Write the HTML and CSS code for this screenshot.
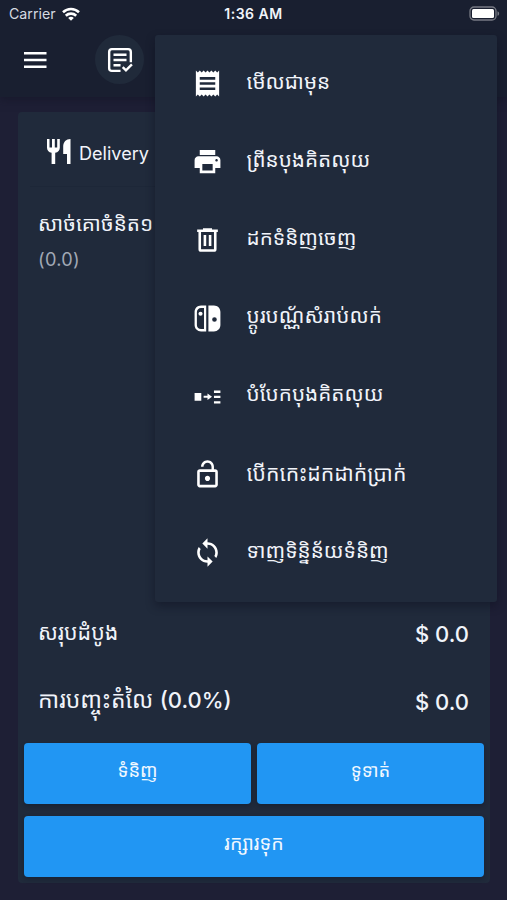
FILE: index.html
```html
<!DOCTYPE html>
<html lang="km">
<head>
<meta charset="utf-8">
<title>Order</title>
<link rel="stylesheet" href="styles.css">
</head>
<body>
<div class="screen">
  <header class="top">
    <div class="status">
      <div class="carrier"><span>Carrier</span>
        <svg class="wifi" viewBox="0 0 18 14"><g fill="none" stroke="#fff" stroke-width="2.6"><path d="M1 5.200C5.600.9 12.400.9 17 5.200"/><path d="M3.800 8.700c2.900-2.800 7.500-2.800 10.400 0"/></g><path d="M6.200 10.900c1.600-1.500 4-1.500 5.600 0L9 13.800z" fill="#fff"/></svg>
      </div>
      <div class="time">1:36 AM</div>
      <svg class="battery" viewBox="0 0 32 15"><rect x="1" y="1" width="26" height="13" rx="4" fill="none" stroke="#777a84" stroke-width="1.300"/><rect x="3" y="3" width="22" height="9" rx="1.500" fill="#fff"/><path d="M28.500 5.200c2.200.8 2.200 3.800 0 4.600z" fill="#777a84"/></svg>
    </div>
    <div class="bar">
      <svg class="burger" viewBox="0 0 24 18"><path d="M1 2.300h22.500M1 9h22.500M1 15.700h22.500" stroke="#fff" stroke-width="2.600"/></svg>
      <div class="round">
        <svg viewBox="0 0 24 24" fill="none" stroke="#fff" stroke-width="2.200"><path d="M12.500 22H4.500Q2 22 2 19.500V4.500Q2 2 4.500 2h15Q22 2 22 4.500V14M6 7.200h12M6 12h12M6 16.800h6.500M14.500 18.500l3 3 5.500-5.500"/></svg>
      </div>
    </div>
  </header>
  <main class="card">
    <div class="mode">
      <svg viewBox="0 0 24 26" fill="#fff"><path d="M0 1h2.500v8.500H5V1h2.800v8.500h2.400V1h2.600v8.800c0 2.700-1.700 4.500-4.600 5V26H4.600V14.800C1.700 14.300 0 12.500 0 9.800zM23.500 1v25H20V16h-3.800V8.500C16.200 4 19 1 23.500 1z"/></svg>
      <span>Delivery</span>
    </div>
    <div class="item">
      <div class="kh name">សាច់គោចំនិត១</div>
      <div class="qty">(0.0)</div>
    </div>
    <div class="totals">
      <div class="total"><span class="kh label">សរុបដំបូង</span><b>$ 0.0</b></div>
      <div class="total"><span class="kh label discount">ការបញ្ចុះតំលៃ <b>(0.0%)</b></span><b>$ 0.0</b></div>
    </div>
    <div class="buttons">
      <button class="kh">ទំនិញ</button>
      <button class="kh">ទូទាត់</button>
      <button class="kh wide">រក្សារទុក</button>
    </div>
  </main>
  <nav class="menu">
    <div class="row"><svg viewBox="0 0 24 24"><path d="M18 17H6v-2h12v2zm0-4H6v-2h12v2zm0-4H6V7h12v2zM3 22l1.500-1.500L6 22l1.500-1.500L9 22l1.500-1.500L12 22l1.500-1.500L15 22l1.500-1.500L18 22l1.500-1.500L21 22V2l-1.500 1.500L18 2l-1.500 1.500L15 2l-1.500 1.500L12 2l-1.500 1.500L9 2 7.500 3.500 6 2 4.500 3.500 3 2v20z"/></svg><span class="kh">មើលជាមុន</span></div>
    <div class="row"><svg viewBox="0 0 24 24"><path d="M19 8H5c-1.660 0-3 1.340-3 3v6h4v4h12v-4h4v-6c0-1.660-1.340-3-3-3zm-3 11H8v-5h8v5zm3-7c-.55 0-1-.45-1-1s.45-1 1-1 1 .45 1 1-.45 1-1 1zm-1-9H6v4h12V3z"/></svg><span class="kh">ព្រីនបុងគិតលុយ</span></div>
    <div class="row"><svg viewBox="0 0 24 24"><path fill-rule="evenodd" d="M8.500 3.200h7v1H20V6.200h-1V19.500Q19 21.500 17 21.500H7Q5 21.500 5 19.500V6.200H4V4.200h4.500zM7 6.200V19.500H17V6.200zM9 8.500h2v8.500H9zM13 8.500h2v8.500h-2z"/></svg><span class="kh">ដកទំនិញចេញ</span></div>
    <div class="row"><svg viewBox="0 0 24 24"><path fill-rule="evenodd" d="M7 2h4v20H7c-2.800 0-5-2.200-5-5V7c0-2.800 2.200-5 5-5zm0 1.800C5.200 3.800 3.800 5.200 3.800 7v10c0 1.800 1.400 3.200 3.200 3.200h2.300V3.800zM12.700 2H17c2.800 0 5 2.200 5 5v10c0 2.800-2.200 5-5 5h-4.300zM17.400 11a1.800 1.800 0 100 3.600 1.800 1.800 0 000-3.600z"/><circle cx="6.600" cy="8.300" r="1.600"/></svg><span class="kh">ប្តូរបណ្ណ័សំរាប់លក់</span></div>
    <div class="row"><svg viewBox="0 0 24 24"><path d="M2 9.200h5.200v6H2zM9 11.500h3V9.600l3.500 2.600-3.500 2.600v-1.900H9zM17 7.400h5v1.800h-5zM17 11.400h5v1.800h-5zM17 15.600h5v1.800h-5z"/></svg><span class="kh">បំបែកបុងគិតលុយ</span></div>
    <div class="row"><svg viewBox="0 0 24 24"><path d="M12 17c1.100 0 2-.9 2-2s-.9-2-2-2-2 .9-2 2 .9 2 2 2zm6-9h-1V6c0-2.760-2.240-5-5-5S7 3.240 7 6h1.900c0-1.710 1.390-3.100 3.100-3.100s3.100 1.390 3.100 3.100v2H6c-1.100 0-2 .9-2 2v10c0 1.100.9 2 2 2h12c1.100 0 2-.9 2-2V10c0-1.100-.9-2-2-2zm0 12H6V10h12v10z"/></svg><span class="kh long">បើកកេះដកដាក់ប្រាក់</span></div>
    <div class="row"><svg viewBox="0 0 24 24"><path d="M12 4V1L8 5l4 4V6c3.310 0 6 2.690 6 6 0 1.010-.25 1.970-.7 2.800l1.460 1.460C19.540 15.030 20 13.570 20 12c0-4.420-3.580-8-8-8zm0 14c-3.310 0-6-2.690-6-6 0-1.010.25-1.970.7-2.800L5.240 7.740C4.460 8.970 4 10.430 4 12c0 4.420 3.580 8 8 8v3l4-4-4-4v3z"/></svg><span class="kh">ទាញទិន្និន័យទំនិញ</span></div>
  </nav>
</div>
</body>
</html>
```
FILE: styles.css
```css
* { box-sizing: border-box; }
body { margin: 0; background: #1e1f35; color: #f1f4fa; font-family: Inter, "Noto Sans", "Noto Sans Khmer", "Khmer OS", sans-serif; }
.screen { position: relative; width: 507px; height: 900px; overflow: hidden; display: flex; flex-direction: column; }
.top { height: 97px; background: #191f30; box-shadow: 0 3px 8px rgba(18, 20, 36, .5); }
.status { height: 27px; display: grid; grid-template-columns: 1fr auto 1fr; align-items: center; padding: 0 6px 0 9px; }
.carrier { display: flex; align-items: center; gap: 6px; color: #d6dae1; font-size: 14.2px; }
.wifi { width: 18px; height: 14px; }
.time { font-weight: 600; font-size: 14px; letter-spacing: .5px; margin-right: 3px; }
.battery { width: 32px; height: 15px; justify-self: end; }
.bar { display: flex; align-items: center; height: 65px; padding-left: 23px; gap: 48px; }
.burger { width: 24px; height: 18px; }
.round { width: 49px; height: 49px; border-radius: 50%; background: #202a3a; display: flex; align-items: center; justify-content: center; }
.round svg { width: 26px; height: 26px; }
.card { margin: 15px 17px 0 18px; height: 771px; background: #202a3b; border-radius: 4px; display: flex; flex-direction: column; padding: 0 6px 6px; }
.mode { margin: 10px 6px 0; height: 65px; display: flex; align-items: center; gap: 8px; padding-left: 17px; font-size: 18.1px; border-bottom: 1px solid #1d2738; }
.mode span { margin-top: -2px; }
.mode svg { width: 24px; height: 26px; margin-top: -6px; }
.item { padding: 23px 14px 0; }
.kh { font-size: 20.7px; line-height: 28px; white-space: nowrap; }
.qty { margin-top: 9px; font-size: 18.2px; line-height: 24px; color: #a1a8b5; letter-spacing: .3px; }
.totals { margin-top: auto; padding: 0 15px 0 14px; }
.total { height: 68px; display: flex; align-items: center; justify-content: space-between; }
.total b { font-size: 22px; font-weight: 500; }
.label { font-size: 21.4px; padding-bottom: 5px; }
.discount { font-size: 22.9px; }
.buttons { margin-top: 7px; display: grid; grid-template-columns: 1fr 1fr; gap: 12px 6px; }
.buttons button { height: 61px; border: 0; border-radius: 4px; padding: 0 0 7px; background: #2196f3; color: #f1f8ff; font-family: inherit; font-size: 18.4px; box-shadow: 0 2px 4px rgba(10, 18, 35, .35); }
.buttons .wide { grid-column: 1 / 3; font-size: 19.6px; }
.menu { position: absolute; left: 155px; top: 35px; width: 342px; height: 567px; padding-top: 10px; background: #202a3b; border-radius: 3px; box-shadow: 0 4px 10px rgba(10, 14, 28, .45); }
.row { height: 78.200px; display: flex; align-items: center; padding-left: 37px; gap: 23.500px; }
.row svg { width: 31px; height: 31px; fill: #fff; margin-top: -1px; }
.row .kh { padding-bottom: 5px; }
.row .long { font-size: 21.2px; }
```
